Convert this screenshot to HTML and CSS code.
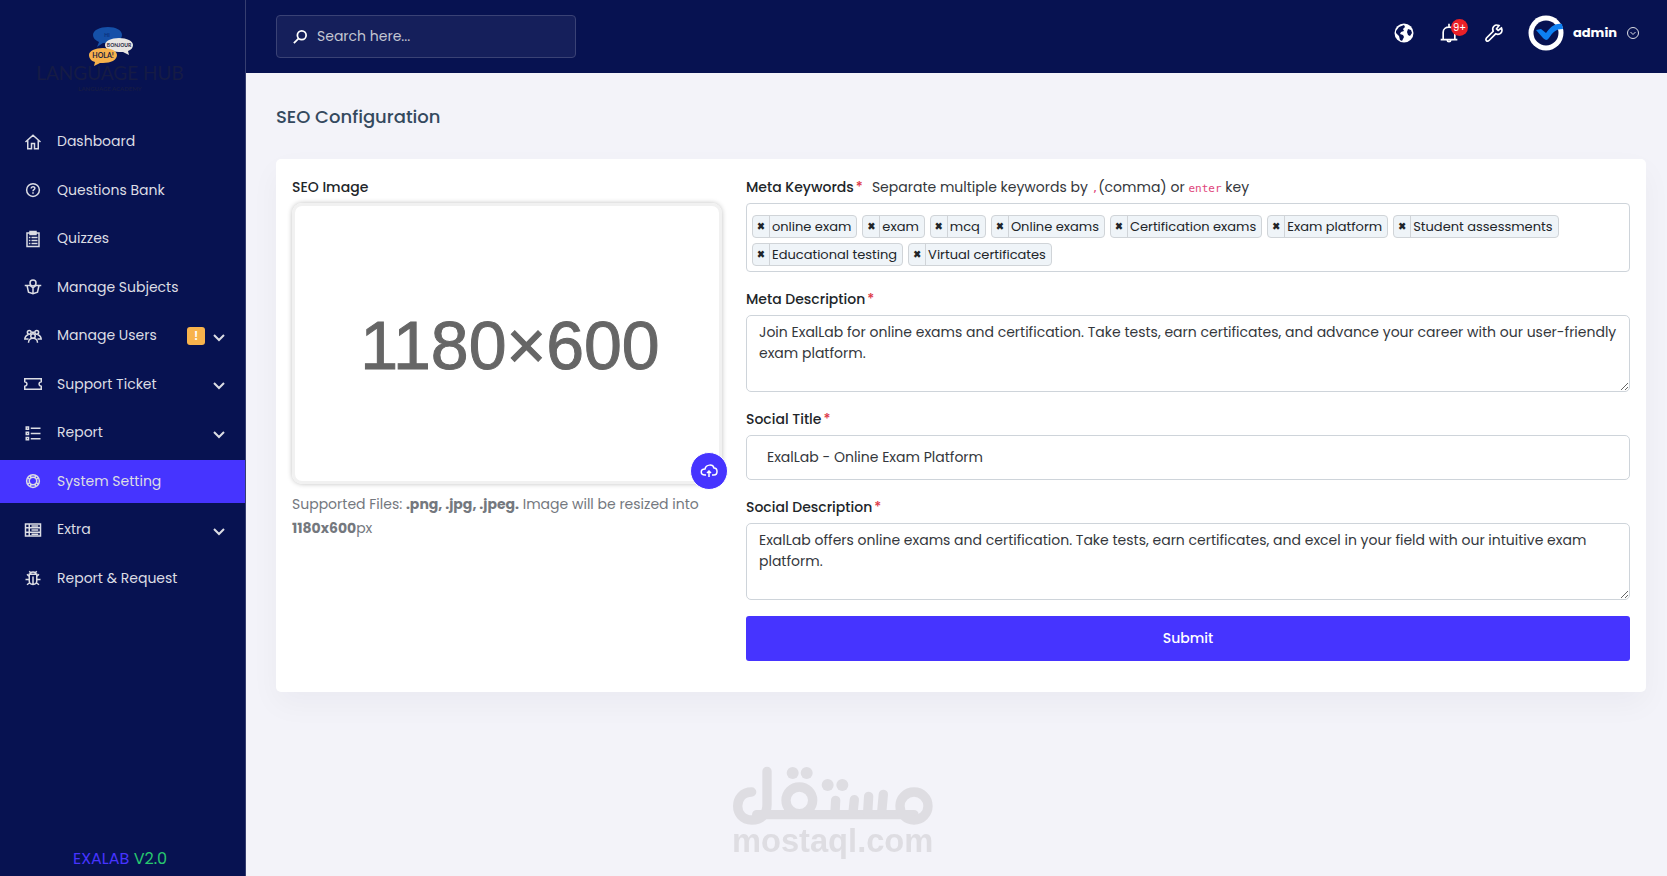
FILE: index.html
```html
<!DOCTYPE html>
<html lang="en">
<head>
  <meta charset="UTF-8">
  <meta name="viewport" content="width=device-width, initial-scale=1.0">
  <title>ExaLab - SEO Configuration</title>
  <link rel="stylesheet" href="styles.css">
</head>
<body>

  <div class="page-wrapper">

    <aside class="sidebar">
      <a href="#" class="sidebar-logo" aria-label="Language Hub">
        <svg viewBox="0 0 170 70" width="170" height="70">
          <g transform="translate(15 0)">
            <path fill="#1550a8" d="M68 1c8 0 14 3 14 8s-6 8-14 8h-5l-6 4 2-5c-4-2-6-4-6-7 0-5 7-8 15-8z"/>
            <path fill="#e8e6e2" d="M79 12c8 0 14 3 14 7 0 3-2 5-5 6l1 4-6-3h-4c-8 0-14-3-14-7s6-7 14-7z"/>
            <path fill="#f6b14c" d="M63 22c8 0 14 3 14 7 0 5-6 8-14 8h-3l-6 3 1-4c-4-1-6-4-6-7 0-4 6-7 14-7z"/>
            <text class="logo-tiny" x="67" y="11" fill="#0a2d78">HI</text>
            <text class="logo-tiny" x="79" y="21" fill="#1c2340">BONJOUR</text>
            <text class="logo-small" x="63" y="32" fill="#1c2340">HOLA!</text>
          </g>
          <text class="logo-name" x="85" y="54">LANGUAGE HUB</text>
          <text class="logo-tag" x="85" y="65">LANGUAGE ACADEMY</text>
        </svg>
      </a>

      <nav class="sidebar-menu">
        <a href="#" class="menu-item">
          <svg class="icon" viewBox="0 0 24 24"><path d="M2 12 12 3l10 9M5 10v11h5v-7h4v7h5V10"/></svg>
          <span class="menu-title">Dashboard</span>
        </a>
        <a href="#" class="menu-item">
          <svg class="icon" viewBox="0 0 24 24"><circle cx="12" cy="12" r="8.500"/><path d="M9.500 10c0-3 5-3 5-.5 0 2-2.500 2-2.500 4M12 15v2"/></svg>
          <span class="menu-title">Questions Bank</span>
        </a>
        <a href="#" class="menu-item">
          <svg class="icon" viewBox="0 0 24 24"><path d="M4 4h16v18H4zM8 2h8v4H8zM6.500 10h2M6.500 14h2M6.500 18h2M10 10h8M10 14h8M10 18h8"/></svg>
          <span class="menu-title">Quizzes</span>
        </a>
        <a href="#" class="menu-item">
          <svg class="icon" viewBox="0 0 24 24"><circle cx="12" cy="6.500" r="4"/><path d="M1 10h7l4 3 4-3h7M4 10l2 9 6 2 6-2 2-9M12 12v9"/></svg>
          <span class="menu-title">Manage Subjects</span>
        </a>
        <a href="#" class="menu-item">
          <svg class="icon" viewBox="0 0 24 24"><circle cx="7" cy="7" r="2.500"/><circle cx="17" cy="7" r="2.500"/><circle cx="12" cy="12" r="3"/><path d="M1 17c0-4 2-6 5-7M23 17c0-4-2-6-5-7M6 21c0-8 12-8 12 0M1 16h5M23 16h-5M10 7h4"/></svg>
          <span class="menu-title">Manage Users</span>
          <span class="menu-badge">!</span>
          <svg class="chevron" viewBox="0 0 12 14"><path d="M1 6l5 5 5-5"/></svg>
        </a>
        <a href="#" class="menu-item">
          <svg class="icon" viewBox="0 0 24 24"><path d="M1 5h22v4c-4 1-4 5 0 6v4H1v-4c4-1 4-5 0-6z"/></svg>
          <span class="menu-title">Support Ticket</span>
          <svg class="chevron" viewBox="0 0 12 14"><path d="M1 6l5 5 5-5"/></svg>
        </a>
        <a href="#" class="menu-item">
          <svg class="icon" viewBox="0 0 24 24"><path d="M3 4h3v3H3zM3 11h3v3H3zM3 18h3v3H3zM9 5.500h13M9 12.500h13M9 19.500h13"/></svg>
          <span class="menu-title">Report</span>
          <svg class="chevron" viewBox="0 0 12 14"><path d="M1 6l5 5 5-5"/></svg>
        </a>
        <a href="#" class="menu-item active">
          <svg class="icon" viewBox="0 0 24 24"><circle cx="12" cy="12" r="8.500"/><circle cx="12" cy="12" r="5"/><path d="M5 8l3 2M8 5l2 3M16 5l-2 3M19 8l-3 2M5 16l3-2M8 19l2-3M16 19l-2-3M19 16l-3-2"/></svg>
          <span class="menu-title">System Setting</span>
        </a>
        <a href="#" class="menu-item">
          <svg class="icon" viewBox="0 0 24 24"><path d="M2 4h20v16H2zM2 9h20M2 15h20M7 4v16M10 6.500h9M10 12h9M10 17.500h9"/></svg>
          <span class="menu-title">Extra</span>
          <svg class="chevron" viewBox="0 0 12 14"><path d="M1 6l5 5 5-5"/></svg>
        </a>
        <a href="#" class="menu-item">
          <svg class="icon" viewBox="0 0 24 24"><path d="M8 7c0-4 8-4 8 0M7 7h10v9c0 6-10 6-10 0zM12 10v10M9 5 7 3M15 5l2-2M7 10 4 7M17 10l3-3M7 14H2M17 14h5M8 18l-4 3M16 18l4 3"/></svg>
          <span class="menu-title">Report &amp; Request</span>
        </a>
      </nav>

      <div class="version"><span class="version-name">EXALAB</span> <span class="version-no">V2.0</span></div>
    </aside>

    <div class="main">
      <header class="navbar">
        <form class="search">
          <svg class="search-icon" viewBox="0 0 16 16"><circle cx="10" cy="6" r="5"/><path d="M6.500 9.500 1 15"/></svg>
          <input type="search" class="search-field" placeholder="Search here..." aria-label="Search">
        </form>

        <div class="navbar-right">
          <button type="button" class="nav-btn" aria-label="Visit website">
            <svg viewBox="0 0 20 20" width="20" height="20">
              <circle cx="10" cy="10" r="9.500" fill="#fff"/>
              <path fill="#071251" d="M2 8l3-4 5-2 1 2-2 2 1 2-3 1-1 2 3 1 1 2-2 4-2-1-1-4-3-3zM14 6l3 1 1 3-2 3-2-1-1-3z"/>
            </svg>
          </button>
          <button type="button" class="nav-btn" aria-label="Notifications">
            <svg class="line-icon" viewBox="0 0 24 24"><path d="M2 20h20M5 20V11c0-8 14-8 14 0v9M10 21c0 2 4 2 4 0M12 1v4"/></svg>
            <span class="count">9+</span>
          </button>
          <button type="button" class="nav-btn" aria-label="System tools">
            <svg class="line-icon" viewBox="0 0 24 24"><path d="M21 6l-4 3-2-2 3-4c-5-2-9 2-7 7l-8 8c-2 3 1 5 3 3l8-8c5 2 9-2 7-7z"/></svg>
          </button>
          <button type="button" class="profile">
            <svg viewBox="0 0 36 36" width="36" height="36">
              <circle cx="18" cy="18" r="17.500" fill="#fff"/>
              <circle cx="18" cy="18" r="12.500" fill="#071251"/>
              <path fill="#0d80f2" d="M8 15l5-1 5 4c4-5 8-10 16-9l1 5c-7 0-10 3-14 9-2 3-4 2-6 0z"/>
            </svg>
            <span class="profile-name">admin</span>
            <svg class="profile-arrow" viewBox="0 0 14 14"><circle cx="7" cy="7" r="5.500"/><path d="M4.500 6 7 8.500 9.500 6"/></svg>
          </button>
        </div>
      </header>

      <main class="body-wrapper">
        <h1 class="page-title">SEO Configuration</h1>

        <form class="card">
          <div class="col-image">
            <label for="seo-image" class="label">SEO Image</label>
            <div class="image-preview">
              <span>1180×600</span>
              <input type="file" id="seo-image" class="file-input" accept=".png, .jpg, .jpeg">
              <label for="seo-image" class="upload-btn" aria-label="Upload image">
                <svg viewBox="0 0 18 16" width="18" height="16"><path d="M6 12H5c-5 0-5-6 0-6 1-5 8-5 9-1 4 0 4 7 0 7h-2M9 14V8M7 10l2-2 2 2"/></svg>
              </label>
            </div>
            <p class="help">Supported Files: <b>.png, .jpg, .jpeg.</b> Image will be resized into <b>1180x600</b>px</p>
          </div>

          <div class="col-fields">
            <div class="form-group">
              <label for="keywords" class="label required">Meta Keywords</label>
              <small class="hint">Separate multiple keywords by <code>,</code>(comma) or <code>enter</code> key</small>
              <div class="tags">
                <span class="tag"><button type="button" aria-label="Remove">×</button>online exam</span>
                <span class="tag"><button type="button" aria-label="Remove">×</button>exam</span>
                <span class="tag"><button type="button" aria-label="Remove">×</button>mcq</span>
                <span class="tag"><button type="button" aria-label="Remove">×</button>Online exams</span>
                <span class="tag"><button type="button" aria-label="Remove">×</button>Certification exams</span>
                <span class="tag"><button type="button" aria-label="Remove">×</button>Exam platform</span>
                <span class="tag"><button type="button" aria-label="Remove">×</button>Student assessments</span>
                <span class="tag"><button type="button" aria-label="Remove">×</button>Educational testing</span>
                <span class="tag"><button type="button" aria-label="Remove">×</button>Virtual certificates</span>
                <input type="text" id="keywords" class="tag-input">
              </div>
            </div>

            <div class="form-group">
              <label for="meta-description" class="label required">Meta Description</label>
              <textarea id="meta-description" class="field">Join ExalLab for online exams and certification. Take tests, earn certificates, and advance your career with our user-friendly exam platform.</textarea>
            </div>

            <div class="form-group">
              <label for="social-title" class="label required">Social Title</label>
              <input type="text" id="social-title" class="field" value="ExalLab - Online Exam Platform">
            </div>

            <div class="form-group">
              <label for="social-description" class="label required">Social Description</label>
              <textarea id="social-description" class="field">ExalLab offers online exams and certification. Take tests, earn certificates, and excel in your field with our intuitive exam platform.</textarea>
            </div>

            <button type="submit" class="submit-btn">Submit</button>
          </div>
        </form>
      </main>
    </div>
  </div>

  <svg class="watermark" viewBox="69 40 600 290" role="img" aria-label="mostaql.com">
    <g class="watermark-lines">
      <path d="M125 124c-56 0-56 84 0 84 28 0 46-16 46-46V62M140 192h472"/>
      <circle cx="268" cy="149" r="40"/>
      <circle cx="612" cy="166" r="42"/>
      <path d="M375 186l2-37M429 186l4-39M473 186l3-49M515 186l5-55"/>
    </g>
    <g class="watermark-fill">
      <circle cx="248" cy="67" r="18"/>
      <circle cx="290" cy="67" r="18"/>
      <circle cx="353" cy="103" r="18"/>
      <circle cx="397" cy="103" r="18"/>
      <text x="368" y="303">mostaql.com</text>
    </g>
  </svg>

</body>
</html>
```
FILE: styles.css
```css
* {
  box-sizing: border-box;
}

body {
  margin: 0;
  font-family: Poppins, Inter, "Open Sans", sans-serif;
  font-size: 15px;
  line-height: 21px;
  color: #34373c;
  background-color: #f3f3f9;
}

button,
input,
textarea {
  font-family: inherit;
}

button {
  cursor: pointer;
}

a {
  text-decoration: none;
}

.page-wrapper {
  display: flex;
  min-height: 100vh;
}

/* sidebar */
.sidebar {
  flex: 0 0 246px;
  display: flex;
  flex-direction: column;
  background-color: #071251;
  border-right: 1px solid #363e70;
}

.sidebar-logo {
  display: block;
  height: 94px;
  margin: 26px 0 0 25px;
}

.sidebar-logo text {
  text-anchor: middle;
  font-family: Lato, sans-serif;
}

.logo-tiny {
  font-size: 5px;
  font-weight: 700;
}

.logo-small {
  font-size: 7px;
  font-weight: 700;
}

.logo-name {
  font-size: 19px;
  fill: #151b45;
}

.logo-tag {
  font-size: 6px;
  font-weight: 700;
  fill: #151b45;
}

.sidebar-menu {
  display: flex;
  flex-direction: column;
  justify-content: space-between;
  height: 480px;
}

.menu-item {
  display: flex;
  align-items: center;
  height: 43px;
  padding: 0 20px 0 24px;
  color: #dcdde4;
  font-size: 14px;
}

.menu-item.active {
  background-color: #4634ff;
}

.icon {
  width: 18px;
  height: 18px;
  margin-right: 15px;
  fill: none;
  stroke: #dcdde4;
  stroke-width: 2;
}

.menu-title {
  flex: 1;
}

.menu-badge {
  width: 18px;
  height: 18px;
  margin-right: 8px;
  border-radius: 3px;
  background-color: #f8b34c;
  color: #fff;
  font-size: 12px;
  font-weight: 600;
  line-height: 18px;
  text-align: center;
}

.chevron {
  width: 12px;
  height: 14px;
  fill: none;
  stroke: #dcdde4;
  stroke-width: 2;
}

.version {
  margin-top: auto;
  padding: 0 5px 7px 0;
  font-size: 16px;
  text-align: center;
}

.version-name {
  color: #4634ff;
}

.version-no {
  color: #28c76f;
}

/* top bar */
.main {
  flex: 1;
  min-width: 0;
}

.navbar {
  display: flex;
  align-items: flex-start;
  justify-content: space-between;
  height: 73px;
  padding: 15px 27px 0 30px;
  background-color: #071251;
}

.search {
  display: flex;
  align-items: center;
  width: 300px;
  height: 43px;
  padding: 0 16px;
  border: 1px solid #3a4275;
  border-radius: 4px;
  background-color: #151f5b;
}

.search-icon {
  width: 14px;
  height: 14px;
  margin-right: 10px;
  fill: none;
  stroke: #fff;
  stroke-width: 2;
}

.search-field {
  flex: 1;
  min-width: 0;
  padding: 0;
  border: none;
  outline: none;
  background: transparent;
  color: #fff;
  font-size: 14px;
}

.search-field::placeholder {
  color: #c3c6d2;
}

.navbar-right {
  display: flex;
  align-items: center;
}

.nav-btn {
  position: relative;
  display: flex;
  width: 22px;
  height: 22px;
  margin-right: 23px;
  padding: 1px;
  border: none;
  background: none;
}

.line-icon {
  width: 20px;
  height: 20px;
  fill: none;
  stroke: #fff;
  stroke-width: 2;
}

.count {
  position: absolute;
  top: -3px;
  right: -8px;
  width: 17px;
  height: 17px;
  border-radius: 50%;
  background-color: #ea2027;
  color: #fff;
  font-size: 10px;
  line-height: 17px;
  text-align: center;
}

.profile {
  display: flex;
  align-items: center;
  padding: 0;
  border: none;
  background: none;
  color: #fff;
}

.profile-name {
  margin: 0 9px;
  font-size: 13px;
  font-weight: 700;
}

.profile-arrow {
  width: 14px;
  height: 14px;
  fill: none;
  stroke: #dcdde4;
}

/* content */
.body-wrapper {
  padding: 30px 21px 30px 30px;
}

.page-title {
  margin: 0 0 29px;
  color: #34495e;
  font-size: 18px;
  font-weight: 500;
  line-height: 27px;
}

.card {
  display: flex;
  gap: 24px;
  padding: 17px 16px 31px;
  border-radius: 5px;
  background-color: #fff;
  box-shadow: 0 12px 30px rgba(18, 38, 63, 0.04);
}

.col-image {
  flex: 0 0 calc(33.333% - 16px);
}

.col-fields {
  flex: 1;
  min-width: 0;
}

.label {
  display: inline-block;
  margin-bottom: 4px;
  color: #212529;
  font-size: 14px;
  font-weight: 500;
  line-height: 23px;
  vertical-align: top;
}

.required::after {
  content: "*";
  margin-left: 2px;
  color: #dc3545;
}

.hint {
  margin-left: 5px;
  font-size: 14px;
  line-height: 23px;
}

.hint code {
  color: #e0457b;
  font-family: "DejaVu Sans Mono", monospace;
  font-size: 11px;
}

.image-preview {
  position: relative;
  display: flex;
  align-items: center;
  justify-content: center;
  height: 281px;
  padding: 3px 0 0 6px;
  border: 3px solid #f1f1f1;
  border-radius: 10px;
  box-shadow: 0 0 5px rgba(0, 0, 0, 0.25);
  color: #666;
  font-family: "Liberation Sans", Arial, sans-serif;
  font-size: 68px;
  -webkit-text-stroke: 1px #666;
}

.file-input {
  position: absolute;
  width: 1px;
  height: 1px;
  opacity: 0;
}

.upload-btn {
  position: absolute;
  right: -9px;
  bottom: -9px;
  display: flex;
  align-items: center;
  justify-content: center;
  width: 38px;
  height: 38px;
  border: 1px solid #fff;
  border-radius: 50%;
  background-color: #4634ff;
  cursor: pointer;
}

.upload-btn svg {
  fill: none;
  stroke: #fff;
  stroke-width: 1.5;
}

.help {
  margin: 8px 0 0;
  color: #74787e;
  font-size: 14px;
  line-height: 24px;
}

.form-group {
  margin-bottom: 16px;
}

.tags {
  display: flex;
  flex-wrap: wrap;
  gap: 5px;
  padding: 11px 5px 5px;
  border: 1px solid #ced4da;
  border-radius: 4px;
}

.tag {
  display: flex;
  height: 23px;
  padding-right: 5px;
  border: 1px solid #d0d4d8;
  border-radius: 4px;
  background-color: #eff4f8;
  color: #212529;
  font-size: 13px;
}

.tag button {
  width: 17px;
  margin-right: 2px;
  padding: 0;
  border: none;
  border-right: 1px solid #d0d4d8;
  background: none;
  color: #212529;
  font-size: 13px;
  font-weight: 800;
  line-height: 21px;
}

.tag-input {
  width: 40px;
  height: 23px;
  padding: 0;
  border: none;
  outline: none;
}

.field {
  display: block;
  width: 100%;
  border: 1px solid #ced4da;
  border-radius: 5px;
  background-color: #fff;
  color: #34373c;
  font-size: 14px;
}

input.field {
  height: 45px;
  padding: 0 20px;
}

textarea.field {
  height: 77px;
  padding: 6px 12px;
  line-height: 21px;
  resize: vertical;
}

.submit-btn {
  display: block;
  width: 100%;
  height: 45px;
  border: none;
  border-radius: 3px;
  background-color: #4634ff;
  color: #fff;
  font-size: 14px;
  font-weight: 500;
}

.watermark {
  position: fixed;
  bottom: 15px;
  left: 50%;
  width: 200px;
  margin-left: -101px;
  pointer-events: none;
}

.watermark-lines {
  fill: none;
  stroke: #dedde2;
  stroke-width: 28;
  stroke-linecap: round;
}

.watermark-fill {
  fill: #dedde2;
}

.watermark text {
  font-family: "Liberation Sans", Arial, sans-serif;
  font-size: 98px;
  font-weight: 700;
  text-anchor: middle;
}
```
